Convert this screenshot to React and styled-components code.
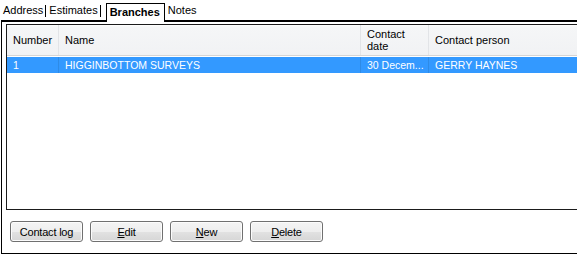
import React from 'react';
import styled, { createGlobalStyle } from 'styled-components';

const GlobalStyle = createGlobalStyle`
  html, body {
    margin: 0;
    padding: 0;
    background: #ffffff;
    overflow: hidden;
  }
  body {
    font-family: "Liberation Sans", Arial, sans-serif;
    font-size: 11px;
    color: #000;
  }
`;

const Page = styled.div`
  width: 600px;
  padding-left: 1px;
`;

const TabStrip = styled.div`
  display: flex;
  align-items: flex-end;
  height: 20px;
  padding-left: 2px;
`;

const Tab = styled.div`
  position: relative;
  display: flex;
  align-items: center;
  height: ${(p) => (p.$active ? '16px' : '14px')};
  padding: ${(p) => (p.$active ? '0 4px 2px 3px' : `0 ${p.$sep ? 3 : 0}px 3px ${p.$indent || 0}px`)};
  margin-bottom: ${(p) => (p.$active ? '-2px' : '0')};
  margin-left: ${(p) => (p.$active ? '5px' : '0')};
  font-weight: ${(p) => (p.$active ? 'bold' : 'normal')};
  background: #fff;
  border: ${(p) => (p.$active ? '1px solid #000' : 'none')};
  border-bottom: none;
  z-index: ${(p) => (p.$active ? 1 : 0)};

  &::after {
    content: '';
    display: ${(p) => (p.$sep ? 'block' : 'none')};
    position: absolute;
    right: 0;
    top: 2px;
    bottom: 3px;
    width: 1px;
    background: #000;
  }
`;

const Panel = styled.div`
  display: flex;
  flex-direction: column;
  border: 1px solid #000;
  border-top-width: 2px;
  padding: 2px 0 11px 4px;
`;

const ListBox = styled.div`
  height: 184px;
  border: 1px solid #1b1b1b;
  border-right: none;
  background: #fff;
`;

const Row = styled.div`
  display: grid;
  grid-template-columns: 51px 302px 68px 1fr;
  height: ${(p) => p.$h}px;
  background: ${(p) =>
    p.$head ? 'linear-gradient(#ffffff 0, #f5f6f7 2px, #f1f2f4 100%)' : p.$selected ? '#3399ff' : '#fff'};
  color: ${(p) => (p.$selected ? '#fff' : '#000')};
  border-bottom: ${(p) => (p.$head ? '1px solid #d5d5d5' : 'none')};
  margin-bottom: ${(p) => (p.$head ? '1px' : '0')};
`;

const Cell = styled.div`
  display: flex;
  align-items: center;
  padding-left: 6px;
  font-size: ${(p) => (p.$head ? '11px' : '10.5px')};
  line-height: 12px;
  white-space: nowrap;
  overflow: hidden;
  border-left: ${(p) =>
    p.$first ? 'none' : p.$head ? '1px solid #e2e4e7' : '1px solid #2e8be6'};
`;

const ButtonRow = styled.div`
  display: flex;
  gap: 7px;
  margin-top: 11px;
  padding-left: 4px;
`;

const Button = styled.button`
  width: 73px;
  height: 21px;
  padding: 0;
  border: 1px solid #707070;
  border-radius: 3px;
  background: linear-gradient(#f4f4f4 0%, #eeeeee 50%, #e2e2e2 51%, #d6d6d6 100%);
  box-shadow: inset 0 0 0 1px #fcfcfc;
  font-family: "Liberation Sans", Arial, sans-serif;
  font-size: 11px;
  color: #000;
  letter-spacing: -0.2px;
`;

const Key = styled.u`
  text-underline-offset: 1px;
`;

const columns = ['Number', 'Name', 'Contact\ndate', 'Contact person'];
const rows = [['1', 'HIGGINBOTTOM SURVEYS', '30 Decem...', 'GERRY HAYNES']];

export default function App() {
  return (
    <>
      <GlobalStyle />
      <Page>
        <TabStrip>
          <Tab $sep>Address</Tab>
          <Tab $sep $indent={3}>Estimates</Tab>
          <Tab $active>Branches</Tab>
          <Tab $indent={3}>Notes</Tab>
        </TabStrip>
        <Panel>
          <ListBox>
            <Row $head $h={30}>
              {columns.map((c, i) => (
                <Cell key={c} $head $first={i === 0}>
                  <span style={{ whiteSpace: 'pre' }}>{c}</span>
                </Cell>
              ))}
            </Row>
            {rows.map((r) => (
              <Row key={r[0]} $selected $h={16}>
                {r.map((v, i) => (
                  <Cell key={i} $first={i === 0}>{v}</Cell>
                ))}
              </Row>
            ))}
          </ListBox>
          <ButtonRow>
            <Button>Contact log</Button>
            <Button><Key>E</Key>dit</Button>
            <Button><Key>N</Key>ew</Button>
            <Button><Key>D</Key>elete</Button>
          </ButtonRow>
        </Panel>
      </Page>
    </>
  );
}
